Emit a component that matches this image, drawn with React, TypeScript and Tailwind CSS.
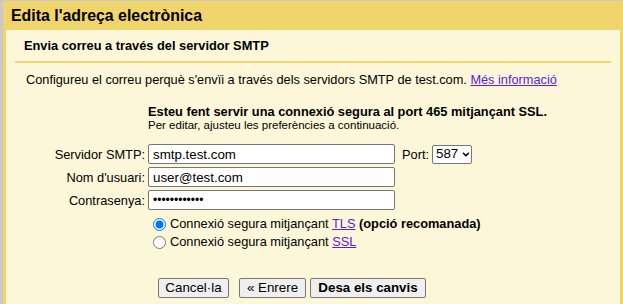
import React from 'react';
import { ChevronDown } from 'lucide-react';

const font = { fontFamily: '"Liberation Sans", Arial, sans-serif' };

const Field: React.FC<{ label: string; children: React.ReactNode }> = ({ label, children }) => (
  <>
    <div className="h-[20px] flex items-center justify-end pr-[3px] text-[12.8px] leading-[15px] text-black">{label}</div>
    <div className="h-[20px] flex items-center">{children}</div>
  </>
);

const Btn: React.FC<{ w: string; bold?: boolean; children: React.ReactNode }> = ({ w, bold, children }) => (
  <button
    className={`${w} h-[20px] bg-[#efefef] border border-[#767676] rounded-[2px] text-[13.33px] leading-[16px] text-black ${bold ? 'font-bold' : ''}`}
  >
    {children}
  </button>
);

export default function App() {
  return (
    <div className="w-[623px] h-[304px] overflow-hidden bg-[#c9c9c9] pt-px pl-[3px]" style={font}>
      <div className="h-full bg-[#f0d46c] flex flex-col">
        {/* Header */}
        <div className="h-[29px] shrink-0 flex items-center pl-[8px]">
          <span className="text-[15.9px] leading-[18px] font-bold text-black">Edita l'adreça electrònica</span>
        </div>

        {/* Panel */}
        <div className="flex-1 bg-[#fdf7d9] mx-[3px] flex flex-col">
          <div className="pt-[8px] pl-[18px] text-[12.8px] leading-[15px] font-bold text-black">
            Envia correu a través del servidor SMTP
          </div>
          <div className="mt-[8px] mx-[9px] h-[2px] bg-[#f0d46c]" />

          <div className="mt-[9px] pl-[20px] text-[12.75px] leading-[15px] text-black">
            Configureu el correu perquè s'envïi a través dels servidors SMTP de test.com.{' '}
            <a className="text-[#5a22d8] underline">Més informació</a>
          </div>

          <div className="mt-[17px] ml-[142px] text-black">
            <div className="text-[12.8px] leading-[15px] font-bold">
              Esteu fent servir una connexió segura al port 465 mitjançant SSL.
            </div>
            <div className="text-[11.5px] leading-[13px]">Per editar, ajusteu les preferències a continuació.</div>
          </div>

          {/* Form */}
          <div className="mt-[12px] grid grid-cols-[142px_auto] gap-y-[3px]">
            <Field label="Servidor SMTP:">
              <input
                readOnly
                value="smtp.test.com"
                className="w-[247px] h-[20px] border border-[#767676] rounded-[2px] bg-white px-[4px] text-[13.33px] text-black outline-none"
              />
              <span className="ml-[7px] text-[12.8px] leading-[15px] text-black">Port:</span>
              <div className="ml-[3px] w-[40px] h-[19px] border border-[#767676] rounded-[2px] bg-white flex items-center pl-[3px] gap-[3px] text-[13.33px] text-black">
                <span>587</span>
                <ChevronDown size={11} strokeWidth={4} />
              </div>
            </Field>
            <Field label="Nom d'usuari:">
              <input
                readOnly
                value="user@test.com"
                className="w-[247px] h-[20px] border border-[#767676] rounded-[2px] bg-white px-[4px] text-[13.33px] text-black outline-none"
              />
            </Field>
            <Field label="Contrasenya:">
              <input
                readOnly
                type="password"
                value="passwordabc1"
                className="w-[247px] h-[20px] border border-[#767676] rounded-[2px] bg-white px-[4px] text-[12px] text-black outline-none"
              />
            </Field>
          </div>

          {/* Radios */}
          <div className="mt-[5px] ml-[142px] text-[12.8px] leading-[18px] text-black">
            <label className="flex items-center h-[18px]">
              <input type="radio" name="sec" defaultChecked className="ml-[5px] mr-[4px] w-[13px] h-[13px]" />
              <span>
                Connexió segura mitjançant <a className="text-[#5a22d8] underline">TLS</a>{' '}
                <b>(opció recomanada)</b>
              </span>
            </label>
            <label className="flex items-center h-[18px]">
              <input type="radio" name="sec" className="ml-[5px] mr-[4px] w-[13px] h-[13px]" />
              <span>
                Connexió segura mitjançant <a className="text-[#5a22d8] underline">SSL</a>
              </span>
            </label>
          </div>

          {/* Buttons */}
          <div className="mt-[27px] ml-[152px] flex">
            <Btn w="w-[71px]">Cancel·la</Btn>
            <div className="w-[10px]" />
            <Btn w="w-[67px]">« Enrere</Btn>
            <div className="w-[4px]" />
            <Btn w="w-[116px]" bold>
              Desa els canvis
            </Btn>
          </div>
        </div>
      </div>
    </div>
  );
}
